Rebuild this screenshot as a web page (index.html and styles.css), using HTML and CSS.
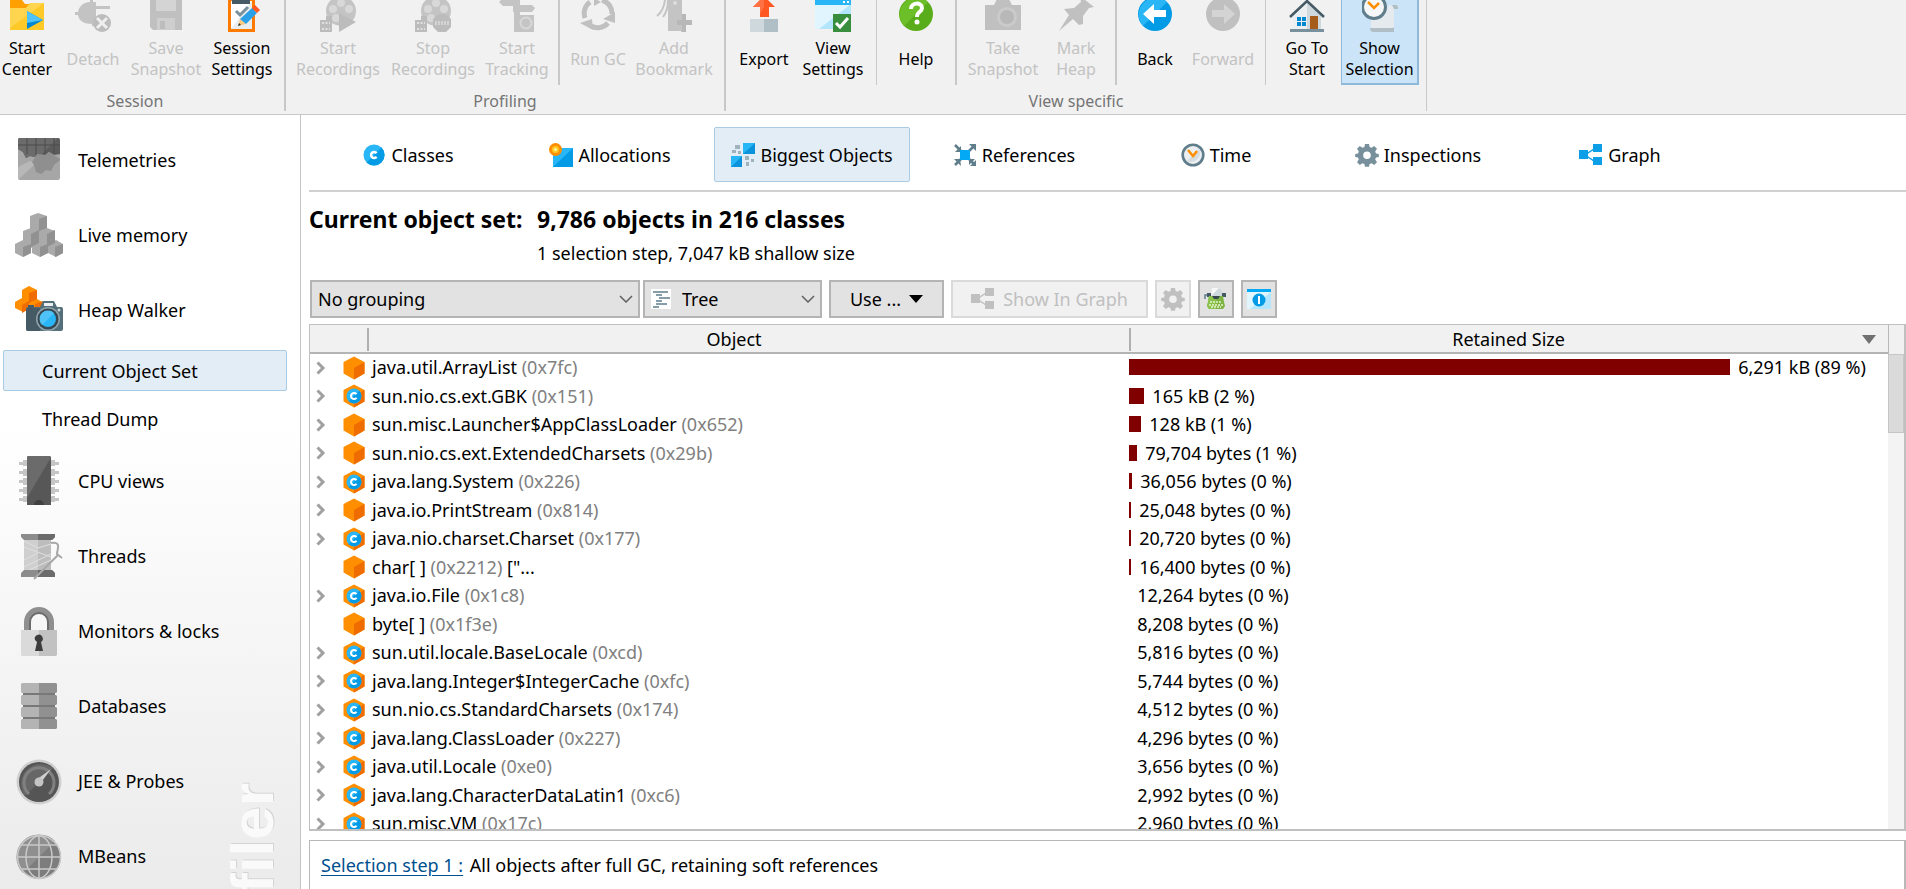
FILE: index.html
```html
<!DOCTYPE html>
<html lang="en">
<head>
<meta charset="utf-8">
<title>JProfiler - Heap Walker</title>
<link rel="stylesheet" href="styles.css">
</head>
<body>
<svg class="sprite" aria-hidden="true">
  <symbol id="cube" viewBox="0 0 22 24"><path fill="#ff8f00" d="M11 0.500L21.500 6v11.500L11 23.500 0.500 17.500V6z"/><path fill="#ef6c00" d="M11 12l10.500-6v11.500L11 23.500z"/></symbol>
  <symbol id="klass" viewBox="0 0 22 24"><path fill="#ff8f00" d="M11 0.500L21.500 6v11.500L11 23.500 0.500 17.500V6z"/><path fill="#ef6c00" d="M11 12l10.500-6v11.500L11 23.500z"/><circle cx="11" cy="12" r="7.500" fill="#29b6f6"/><path fill="#039be5" d="M16.300 6.700a7.500 7.500 0 0 1-10.600 10.600z"/><path d="M13.500 10.300a3 3 0 1 0 0 3.400" fill="none" stroke="#fff" stroke-width="2"/></symbol>
  <symbol id="expand" viewBox="0 0 10 14"><path d="M1.500 1.500L7 7l-5.500 5.500" fill="none" stroke="#a0a0a0" stroke-width="3"/></symbol>
  <symbol id="chev" viewBox="0 0 14 8"><path d="M1 1l6 6 6-6" fill="none" stroke="#606060" stroke-width="1.500"/></symbol>
  <symbol id="box3" viewBox="0 0 24 24"><path d="M18 4L6 12l12 8" fill="none" stroke="currentColor" stroke-width="1.500"/><path fill="currentColor" d="M0 7h9v9H0zM14 1h9v8h-9zM14 14h9v8h-9z"/></symbol>
  <symbol id="cog" viewBox="0 0 24 24"><path fill="currentColor" fill-rule="evenodd" d="M10 1h4l.6 3 2 .8L19.200 3 22 5.800l-1.800 2.600.8 2 2.800.6v3l-2.800.6-.8 2L22 19.200 19.200 22l-2.600-1.800-2 .8-.6 2.700h-4L9.400 21l-2-.8L4.800 22 2 19.200l1.800-2.600-.8-2L.2 14v-3l2.800-.6.8-2L2 5.800 4.800 3l2.600 1.800 2-.8zM12 8.500a3.800 3.800 0 1 0 0 7.600 3.800 3.800 0 0 0 0-7.600z"/></symbol>
</svg>

<header class="ribbon">
  <section class="group group-session">
    <div class="tools">
      <button class="tool w54"><svg viewBox="0 0 36 32"><path fill="#ffa000" d="M1 0h12l3 4h19v6H1z"/><path fill="#ffca28" d="M1 8h16l4-5h14v27H1z"/><path fill="#ffd54f" d="M1 8h16l4-5h14L1 28z"/><path fill="#0288d1" d="M18 11l16 9-16 9z"/><path fill="#4fc3f7" d="M18 11l16 9-16 3z"/></svg><span>Start<br>Center</span></button>
      <button class="tool one w78" disabled><svg viewBox="0 0 36 32"><path fill="#c3c3c3" d="M0 12h3c1-6 6-10 12-10V0h3v2h3v4h14v3H21v8h3v6h-4v3h-3v-2c-8 0-13-3-14-9H0z"/><circle cx="27" cy="23" r="9" fill="#bcbcbc"/><path d="M22 18l10 10M32 18L22 28" stroke="#eee" stroke-width="3"/></svg><span>Detach</span></button>
      <button class="tool w68" disabled><svg viewBox="0 0 36 32"><path fill="#c0c0c0" d="M2 0h32v30H5l-3-3z"/><path fill="#d4d4d4" d="M8 0h20v11H8z"/><path fill="#cecece" d="M9 18h18v12H9z"/><path fill="#bdbdbd" d="M12 21h5v8h-5z"/></svg><span>Save<br>Snapshot</span></button>
      <button class="tool w84"><svg viewBox="0 0 36 32"><path fill="#ff7a00" d="M4 0h27v32H4z"/><path fill="#fff" d="M7 1h21v28H7z"/><path fill="#e8eef0" d="M28 1v28H7z"/><path fill="#455a64" d="M8 0h18v4H8z"/><path d="M12 11l4 4 8-8" stroke="#78909c" stroke-width="3" fill="none"/><path fill="#ffca80" d="M14 26l2-7 6 5z"/><path fill="#263238" d="M14 26l1-3 2 2z"/><path fill="#29a0e8" d="M16 19L28 8l5 5-11 11z"/><path fill="#ff5722" d="M28 8l3-3 5 5-3 3z"/></svg><span>Session<br>Settings</span></button>
    </div>
    <div class="caption">Session</div>
  </section>
  <section class="group group-profiling">
    <div class="tools">
      <button class="tool w104" disabled><svg viewBox="0 0 36 32"><circle cx="21" cy="11" r="15" fill="#c4c4c4"/><g fill="#d8d8d8"><circle cx="21" cy="3" r="4"/><circle cx="13" cy="9" r="4"/><circle cx="29" cy="9" r="4"/><circle cx="16" cy="18" r="4"/></g><path fill="#bcbcbc" d="M0 20h6v-4h6v16H0zM19 13l17 9-17 10z"/><path d="M2 23h8M2 29h8" stroke="#ececec" stroke-width="1.500" stroke-dasharray="2 1.500"/></svg><span>Start<br>Recordings</span></button>
      <button class="tool w86" disabled><svg viewBox="0 0 36 32"><circle cx="21" cy="11" r="15" fill="#c4c4c4"/><g fill="#d8d8d8"><circle cx="21" cy="3" r="4"/><circle cx="13" cy="9" r="4"/><circle cx="29" cy="9" r="4"/><circle cx="16" cy="18" r="4"/></g><path fill="#bcbcbc" d="M0 20h6v-4h6v16H0zM23 14h8l5 5v8l-5 5h-8l-5-5v-8z"/><path d="M2 23h8M2 29h8" stroke="#ececec" stroke-width="1.500" stroke-dasharray="2 1.500"/><path d="M20 23h14" stroke="#d4d4d4" stroke-width="4" stroke-dasharray="2 1"/></svg><span>Stop<br>Recordings</span></button>
      <button class="tool w82" disabled><svg viewBox="0 0 36 32"><path fill="#c4c4c4" d="M0 2l4-4h17v7h12l3 3-3 4H21v3h14v17H15V12h-1V6H4z"/><circle cx="27" cy="23" r="5.500" fill="none" stroke="#d8d8d8" stroke-width="2"/></svg><span>Start<br>Tracking</span></button>
      <i class="sep wide"></i>
      <button class="tool one w76" disabled><svg viewBox="0 0 36 32"><path d="M10 2A14 14 0 0 0 5 18M11 26a14 14 0 0 0 17-3M32 14A14 14 0 0 0 22 0" fill="none" stroke="#c0c0c0" stroke-width="5"/><path fill="#c0c0c0" d="M0 23l12-4 1 11zM23 19l12 4V12zM14-2v8l7-4z"/></svg><span>Run GC</span></button>
      <button class="tool w76" disabled><svg viewBox="0 0 36 32"><path fill="#c4c4c4" d="M12 0h14v14h4v6h5v5h-5v7h-5v-1H12z"/><path d="M9 0C8 8 5 13 1 16M12 0c0 8-2 13-5 17" fill="none" stroke="#c4c4c4" stroke-width="2"/><path fill="#b8b8b8" d="M26 14h4v6h6v5h-6v7h-4v-7h-5v-5h5z"/><circle cx="19" cy="3" r="2" fill="#ddd"/></svg><span>Add<br>Bookmark</span></button>
    </div>
    <div class="caption">Profiling</div>
  </section>
  <section class="group group-view">
    <div class="tools">
      <button class="tool one w76"><svg viewBox="0 0 36 32"><path fill="#ff5722" d="M18-4l11 11h-6v10h-9V7H7z"/><path fill="#ff7043" d="M18-4v11l-4 7V7H7z"/><path fill="#cfd8dc" d="M4 19h14v13H4z"/><path fill="#b0bec5" d="M18 19h14v13H18z"/></svg><span>Export</span></button>
      <button class="tool w62"><svg viewBox="0 0 36 32"><path fill="#e1f5fe" d="M0 0h36v29H0z"/><path fill="#b3e5fc" d="M36 4v25H4z"/><path fill="#29b6f6" d="M0 0h36v5H0z"/><path d="M28 2h2m2 0h2" stroke="#fff" stroke-width="2"/><path fill="#388e3c" d="M18 14h18v18H18z"/><path d="M21 23l4 4 8-9" fill="none" stroke="#fff" stroke-width="3"/></svg><span>View<br>Settings</span></button>
      <i class="sep far"></i>
      <button class="tool one w78"><svg viewBox="0 0 36 32"><circle cx="18" cy="14" r="17" fill="#5aad1a"/><path fill="#6cbf28" d="M30 2A17 17 0 0 0 6 26z"/><path d="M13 9c0-7 11-7 11-1 0 4-5 4-5 8v1" fill="none" stroke="#fff" stroke-width="4"/><circle cx="19" cy="22" r="2.500" fill="#fff"/></svg><span>Help</span></button>
      <i class="sep wide"></i>
      <button class="tool w92" disabled><svg viewBox="0 0 36 32"><path fill="#c0c0c0" d="M0 5h9l3-6h12l3 6h9v25H0z"/><circle cx="22" cy="17" r="10" fill="#cacaca"/><circle cx="22" cy="17" r="7" fill="#b8b8b8"/></svg><span>Take<br>Snapshot</span></button>
      <button class="tool w54" disabled><svg viewBox="0 0 36 32"><path fill="#c0c0c0" d="M22-4l14 11-5 1-6 8v8l-4 1-6-6L1 31l10-16-5-6 10-1 7-6z"/></svg><span>Mark<br>Heap</span></button>
      <i class="sep wide far"></i>
      <button class="tool one w76"><svg viewBox="0 0 36 32"><circle cx="18" cy="14" r="17" fill="#039be5"/><path fill="#29b6f6" d="M30 2A17 17 0 0 0 6 26z"/><path fill="#fff" d="M6 14L17 4v6h12v7H17v7z"/></svg><span>Back</span></button>
      <button class="tool one w60" disabled><svg viewBox="0 0 36 32"><circle cx="18" cy="14" r="17" fill="#c0c0c0"/><path fill="#d4d4d4" d="M30 14L19 4v6H7v7h12v7z"/></svg><span>Forward</span></button>
      <i class="sep far"></i>
      <button class="tool home"><svg viewBox="0 0 36 32"><path fill="#eceff1" d="M4 13L18 0l14 13v17H4z"/><path fill="#cfd8dc" d="M18 0l14 13v17H18z"/><path d="M1 17L18 1l17 16" fill="none" stroke="#455a64" stroke-width="2.500"/><path fill="#78909c" d="M1 29h34v3H1z"/><path fill="#0288d1" d="M8 17h4v4H8zM13 17h4v4h-4zM8 22h4v4H8zM13 22h4v4h-4z"/><path fill="#a65d1c" d="M21 16h8v13h-8z"/></svg><span>Go To<br>Start</span></button>
      <button class="tool selected w78"><svg viewBox="0 0 36 32"><path fill="#e4eaee" d="M9 9h16l2-4h9v4h-4v20H9z"/><path fill="#b0bec5" d="M8 28h22c2 0 2-1 2-2v6H11c-2 0-3-2-3-4zM30 5h5l2 4h-5z"/><circle cx="12" cy="7" r="11.500" fill="#f5f7f8" stroke="#607d8b" stroke-width="3"/><path d="M6 2l6 6 5-5" fill="none" stroke="#ff8f00" stroke-width="2.500"/></svg><span>Show<br>Selection</span></button>
    </div>
    <div class="caption">View specific</div>
  </section>
</header>

<div class="workspace">
  <nav class="sidebar">
    <a class="nav" href="#telemetries"><svg viewBox="0 0 48 50"><path fill="#a6a6a6" d="M5 3h38q2 0 2 2v38q0 2-2 2H5q-2 0-2-2V5q0-2 2-2z"/><path fill="#b8b8b8" d="M3 32l12-6 6 2-17 16-1-1z"/><path fill="#5c5c5c" d="M5 3h38q2 0 2 2v14l-6 1-5-3-4 4-6-3-4 4-5-1-4 2-3-6-5-3V5q0-2 2-2z"/><path fill="#6b6b6b" d="M5 3h38L26 20l-6 2-5-1-4 2-3-6-5-3V5q0-2 2-2z"/><path d="M3 10h42M12 3v16M21 3v17M30 3v16M39 3v15" stroke="#4c4c4c" stroke-width="1"/><path fill="#8f8f8f" d="M45 24v1l-6 5-3 6-5-1-5 4-5-2-2-7-2-3 5-8 8 1 4-3 6 4z"/></svg>Telemetries</a>
    <a class="nav" href="#live"><svg viewBox="0 0 48 50"><path fill="#aaa" d="M15 6l8-3 9 3v13l-9 4-8-4z"/><path fill="#929292" d="M24 9l8-3v13l-8 4z"/><path fill="#aaa" d="M8 21l8-3 8 3v13l-8 4-8-4zM24 21l8-3 8 3v13l-8 4-8-4zM0 34l8-4 8 4v9l-8 4-8-4zM17 34l8-4 8 4v9l-8 4-8-4zM33 34l8-4 7 4v9l-7 4-8-4z"/><path fill="#919191" d="M16 24l8-4v13l-8 4zM32 24l8-4v13l-8 4zM8 37l8-3v9l-8 4zM25 37l8-3v9l-8 4zM40 37l8-3v9l-8 4z"/></svg>Live memory</a>
    <a class="nav" href="#heap"><svg viewBox="0 0 48 50"><path fill="#ff8f00" d="M7 5l7-4 8 4v9l7 4-9 12-6-7-6 4-8-4V17l7-4z"/><path fill="#ef6c00" d="M14 8l8-3v9l-8 4zM7 20l7-4v8l-7 4zM20 19l8-3v6h-8z"/><path fill="#546e7a" d="M11 24q0-2 2-2h12l3-6h11l3 6h4q2 0 2 2v20q0 2-2 2H13q-2 0-2-2z"/><path fill="#455a64" d="M13 20h6v3h-6zM13 23h12v23H13q-2 0-2-2V24z"/><path fill="#eceff1" d="M29 18h9v3h-9z"/><circle cx="33" cy="34" r="12" fill="#90a4ae"/><circle cx="33" cy="34" r="10.500" fill="#37474f"/><circle cx="33" cy="34" r="8" fill="#29b6f6"/><path fill="#4fc3f7" d="M39 28a8 8 0 0 0-12 12z"/><circle cx="44" cy="25" r="1.500" fill="#cfd8dc"/></svg>Heap Walker</a>
    <a class="sub active" href="#objects">Current Object Set</a>
    <a class="sub" href="#dump">Thread Dump</a>
    <a class="nav" href="#cpu"><svg viewBox="0 0 48 50"><path fill="#c6c6c6" d="M4 6h4V4l6 0v6H8V9H4zM4 15h4v-2h6v7H8v-2H4zM4 24h4v-2h6v7H8v-2H4zM4 33h4v-2h6v7H8v-2H4zM4 42h4v-2h6v6H8v-1H4zM44 6h-4V4l-6 0v6h6V9h4zM44 15h-4v-2h-6v7h6v-2h4zM44 24h-4v-2h-6v7h6v-2h4zM44 33h-4v-2h-6v7h6v-2h4zM44 42h-4v-2h-6v6h6v-1h4z"/><path fill="#575757" d="M13 0h22l1 1v48H12V1z"/><path fill="#6b6b6b" d="M13 0h22v3L12 42V1z"/><path fill="#404040" d="M19 49a5 5 0 0 1 10 0z"/></svg>CPU views</a>
    <a class="nav" href="#threads"><svg viewBox="0 0 48 50"><path fill="#cfcfcf" d="M9 8h27v32H9z"/><path fill="#bdbdbd" d="M23 8h13v32H23z"/><path d="M9 10l14 7 13-4M9 16l27 10M9 36l27-13M9 29l14-7M12 40l24-11" stroke="#e0e0e0" stroke-width="1" fill="none"/><path fill="#8c8c8c" d="M6 3h34v3l-3 3H9L6 6zM9 39h28l3 3v4H6v-4z"/><path fill="#6b6b6b" d="M23 3h17v3l-3 3H23zM23 39h14l3 3v4H23z"/><path d="M36 12c11-2 6 7 6 11l5 4M19 48l24-24" stroke="#a8a8a8" stroke-width="2" fill="none"/></svg>Threads</a>
    <a class="nav" href="#monitors"><svg viewBox="0 0 48 50"><path d="M12 25V16a12 12 0 0 1 24 0v9" fill="none" stroke="#8f8f8f" stroke-width="6"/><path d="M15 25V16a9 9 0 0 1 18 0v9" fill="none" stroke="#6b6b6b" stroke-width="2"/><path fill="#dadada" d="M6 24h18v26H7l-1-1z"/><path fill="#c2c2c2" d="M24 24h18v25l-1 1H24z"/><path fill="#3d3d3d" d="M20 34a4 4 0 1 1 6 2l2 9h-8l2-9z"/></svg>Monitors &amp; locks</a>
    <a class="nav" href="#databases"><svg viewBox="0 0 48 50"><path fill="#787878" d="M8 3h32v44H8z"/><path fill="#b4b4b4" d="M7 2h17v10H7l-1-1V3zM7 14h17v10H7l-1-1v-8zM7 26h17v10H7l-1-1v-8zM7 38h17v10H7l-1-1v-8z"/><path fill="#919191" d="M24 2h17l1 1v8l-1 1H24zM24 14h17l1 1v8l-1 1H24zM24 26h17l1 1v8l-1 1H24zM24 38h17l1 1v8l-1 1H24z"/></svg>Databases</a>
    <a class="nav" href="#jee"><svg viewBox="0 0 48 50"><circle cx="24" cy="26" r="22.500" fill="#cfcfcf"/><circle cx="24" cy="26" r="20" fill="#555"/><path fill="#666" d="M38 12A20 20 0 0 0 10 40z"/><path d="M14 38a15 15 0 1 1 20 0" fill="none" stroke="#808080" stroke-width="3"/><path fill="#cfcfcf" d="M21 24l15-11-11 15z"/><circle cx="24" cy="26" r="4.500" fill="#c4c4c4"/></svg>JEE &amp; Probes</a>
    <a class="nav" href="#mbeans"><svg viewBox="0 0 48 50"><circle cx="24" cy="26" r="22" fill="#7d7d7d"/><path fill="#8f8f8f" d="M40 10A22 22 0 0 0 8 42z"/><g fill="none" stroke="#c9c9c9" stroke-width="1.500"><circle cx="24" cy="26" r="21.500"/><ellipse cx="24" cy="26" rx="13" ry="21"/><path d="M24 4v44M2 26h44M6 14h36M6 38h36"/></g></svg>MBeans</a>
    <span class="watermark">filer</span>
  </nav>

  <main class="content">
    <nav class="tabs">
      <a class="tab" href="#classes"><svg viewBox="0 0 24 24"><circle cx="12" cy="12" r="10.500" fill="#29b6f6"/><path fill="#039be5" d="M19.500 4.500A10.500 10.500 0 0 1 4.500 19.500z"/><path d="M14.500 10.200a3 3 0 1 0 0 3.600" fill="none" stroke="#fff" stroke-width="2.500"/></svg>Classes</a>
      <a class="tab" href="#allocations"><svg viewBox="0 0 24 24"><path fill="#29b6f6" d="M4 5h20v19H4z"/><path fill="#039be5" d="M24 5v19H4z"/><circle cx="6.500" cy="6.500" r="6.500" fill="#ff8f00"/><circle cx="6.500" cy="6.500" r="3.500" fill="#ffca28"/><circle cx="6.500" cy="6.500" r="1.500" fill="#fff59d"/></svg>Allocations</a>
      <a class="tab active" href="#biggest"><svg viewBox="0 0 24 24"><path fill="#29b6f6" d="M12 0h12v11H12zM0 13h11v11H0z"/><path fill="#0a93dc" d="M24 0v11H12zM11 13v11H0z"/><path fill="#9fb3be" d="M4 2h5v4H4zM1 7h4v3H1zM7 8h3v3H7zM14 13h4v4h-4zM20 16h3v3h-3zM15 19h3v4h-3z"/></svg>Biggest Objects</a>
      <a class="tab" href="#references"><svg viewBox="0 0 24 24"><path d="M2 2l20 20M22 2L2 22" stroke="#607d8b" stroke-width="2.500"/><path fill="#607d8b" d="M8 3v6H2zM16 1h7v7zM1 16h6l1 7zM16 16h6l-6 6zM17 23h6v-6z"/><path fill="#03a9f4" d="M7 7h10v10H7z"/></svg>References</a>
      <a class="tab" href="#time"><svg viewBox="0 0 24 24"><circle cx="12" cy="12" r="10.300" fill="#eceff1" stroke="#607d8b" stroke-width="2.600"/><path fill="#d5dce0" d="M18 6A9 9 0 0 1 6 18z"/><path d="M7 7l5 6 4-5" fill="none" stroke="#ff8f00" stroke-width="2.500"/></svg>Time</a>
      <a class="tab" href="#inspections"><svg class="slate" viewBox="0 0 24 24"><use href="#cog"/></svg>Inspections</a>
      <a class="tab" href="#graph"><svg class="blue" viewBox="0 0 24 24"><use href="#box3"/></svg>Graph</a>
    </nav>

    <div class="summary">
      <h1>Current object set:</h1>
      <h1>9,786 objects in 216 classes</h1>
      <p>1 selection step, 7,047 kB shallow size</p>
    </div>

    <div class="toolbar">
      <div class="combo grouping"><select aria-label="Grouping"><option>No grouping</option></select><svg class="arrow"><use href="#chev"/></svg></div>
      <div class="combo mode"><svg class="lead" viewBox="0 0 20 20"><path fill="#fff" d="M0 0h20v20H0z"/><path d="M2 3h15M5 6h6M8 9h11M5 12h6M5 15h11M2 18h6" stroke="#607d8b" stroke-width="1.500"/></svg><select aria-label="View mode"><option>Tree</option></select><svg class="arrow"><use href="#chev"/></svg></div>
      <button class="btn use">Use ...<svg viewBox="0 0 14 8"><path d="M0 0h14L7 8z"/></svg></button>
      <button class="btn show" disabled><svg viewBox="0 0 24 24"><use href="#box3"/></svg>Show In Graph</button>
      <button class="btn square" disabled aria-label="Settings"><svg viewBox="0 0 24 24"><use href="#cog"/></svg></button>
      <button class="btn square" aria-label="Edit"><svg viewBox="0 0 24 24"><path fill="#cfd8dc" d="M8 1h7l3 3v6H7z"/><path fill="#f5f7f8" d="M8 1h7L7 9z"/><path d="M1 12V8h4" fill="none" stroke="#607d8b" stroke-width="1.500"/><path fill="#455a64" d="M3 6h4v4H3zM18 6h4v4h-4z"/><path fill="#7cb342" d="M5 9h14l1 6 1 4-2 3H5l-2-3 1-4z"/><path fill="#8bc34a" d="M5 9h7v13H5l-2-3 1-4z"/><path fill="#37474f" d="M8 9h8l-2 3h-4z"/><path d="M6 15h12M5 18h14M7 20h10" stroke="#e6f4d0" stroke-width="1.500" stroke-dasharray="2 1"/></svg></button>
      <button class="btn square" aria-label="Information"><svg viewBox="0 0 24 24"><path fill="#e1f5fe" d="M0 2h24v20H0z"/><path fill="#b3e5fc" d="M24 5v17H3z"/><path fill="#03a9f4" d="M0 2h24v3H0z"/><circle cx="12" cy="13" r="6.500" fill="#039be5"/><path d="M12 9v8" stroke="#fff" stroke-width="2"/></svg></button>
    </div>

    <div class="frame">
      <div class="scroll">
        <table class="objects">
          <colgroup><col class="c-tree"><col class="c-object"><col class="c-size"></colgroup>
          <thead><tr><th></th><th class="h-object">Object</th><th>Retained Size<svg class="sort" viewBox="0 0 14 9"><path d="M0 0h14L7 9z"/></svg></th></tr></thead>
          <tbody>
            <tr><td><svg class="ex"><use href="#expand"/></svg><svg class="ic"><use href="#cube"/></svg></td><td>java.util.ArrayList <em>(0x7fc)</em></td><td><div class="size"><i style="width:79.2%"></i>6,291 kB (89 %)</div></td></tr>
            <tr><td><svg class="ex"><use href="#expand"/></svg><svg class="ic"><use href="#klass"/></svg></td><td>sun.nio.cs.ext.GBK <em>(0x151)</em></td><td><div class="size"><i style="width:2%"></i>165 kB (2 %)</div></td></tr>
            <tr><td><svg class="ex"><use href="#expand"/></svg><svg class="ic"><use href="#cube"/></svg></td><td>sun.misc.Launcher$AppClassLoader <em>(0x652)</em></td><td><div class="size"><i style="width:1.6%"></i>128 kB (1 %)</div></td></tr>
            <tr><td><svg class="ex"><use href="#expand"/></svg><svg class="ic"><use href="#cube"/></svg></td><td>sun.nio.cs.ext.ExtendedCharsets <em>(0x29b)</em></td><td><div class="size"><i style="width:1.05%"></i>79,704 bytes (1 %)</div></td></tr>
            <tr><td><svg class="ex"><use href="#expand"/></svg><svg class="ic"><use href="#klass"/></svg></td><td>java.lang.System <em>(0x226)</em></td><td><div class="size"><i style="width:0.4%"></i>36,056 bytes (0 %)</div></td></tr>
            <tr><td><svg class="ex"><use href="#expand"/></svg><svg class="ic"><use href="#cube"/></svg></td><td>java.io.PrintStream <em>(0x814)</em></td><td><div class="size"><i style="width:0.26%"></i>25,048 bytes (0 %)</div></td></tr>
            <tr><td><svg class="ex"><use href="#expand"/></svg><svg class="ic"><use href="#klass"/></svg></td><td>java.nio.charset.Charset <em>(0x177)</em></td><td><div class="size"><i style="width:0.26%"></i>20,720 bytes (0 %)</div></td></tr>
            <tr><td><svg class="ex"></svg><svg class="ic"><use href="#cube"/></svg></td><td>char[ ] <em>(0x2212)</em> ["...</td><td><div class="size"><i style="width:0.26%"></i>16,400 bytes (0 %)</div></td></tr>
            <tr><td><svg class="ex"><use href="#expand"/></svg><svg class="ic"><use href="#klass"/></svg></td><td>java.io.File <em>(0x1c8)</em></td><td><div class="size"><i></i>12,264 bytes (0 %)</div></td></tr>
            <tr><td><svg class="ex"></svg><svg class="ic"><use href="#cube"/></svg></td><td>byte[ ] <em>(0x1f3e)</em></td><td><div class="size"><i></i>8,208 bytes (0 %)</div></td></tr>
            <tr><td><svg class="ex"><use href="#expand"/></svg><svg class="ic"><use href="#klass"/></svg></td><td>sun.util.locale.BaseLocale <em>(0xcd)</em></td><td><div class="size"><i></i>5,816 bytes (0 %)</div></td></tr>
            <tr><td><svg class="ex"><use href="#expand"/></svg><svg class="ic"><use href="#klass"/></svg></td><td>java.lang.Integer$IntegerCache <em>(0xfc)</em></td><td><div class="size"><i></i>5,744 bytes (0 %)</div></td></tr>
            <tr><td><svg class="ex"><use href="#expand"/></svg><svg class="ic"><use href="#klass"/></svg></td><td>sun.nio.cs.StandardCharsets <em>(0x174)</em></td><td><div class="size"><i></i>4,512 bytes (0 %)</div></td></tr>
            <tr><td><svg class="ex"><use href="#expand"/></svg><svg class="ic"><use href="#klass"/></svg></td><td>java.lang.ClassLoader <em>(0x227)</em></td><td><div class="size"><i></i>4,296 bytes (0 %)</div></td></tr>
            <tr><td><svg class="ex"><use href="#expand"/></svg><svg class="ic"><use href="#klass"/></svg></td><td>java.util.Locale <em>(0xe0)</em></td><td><div class="size"><i></i>3,656 bytes (0 %)</div></td></tr>
            <tr><td><svg class="ex"><use href="#expand"/></svg><svg class="ic"><use href="#klass"/></svg></td><td>java.lang.CharacterDataLatin1 <em>(0xc6)</em></td><td><div class="size"><i></i>2,992 bytes (0 %)</div></td></tr>
            <tr><td><svg class="ex"><use href="#expand"/></svg><svg class="ic"><use href="#klass"/></svg></td><td>sun.misc.VM <em>(0x17c)</em></td><td><div class="size"><i></i>2,960 bytes (0 %)</div></td></tr>
          </tbody>
        </table>
      </div>
      <div class="bar"><div class="corner"></div><div class="thumb"></div></div>
    </div>

    <div class="steps"><a href="#step1">Selection step 1 :</a> All objects after full GC, retaining soft references</div>
  </main>
</div>
</body>
</html>
```
FILE: styles.css
```css
* { box-sizing: border-box; }
body {
  margin: 0;
  height: 100vh;
  display: flex;
  flex-direction: column;
  overflow: hidden;
  background: #fff;
  color: #000;
  font: 18px/22px "Noto Sans", "Open Sans", sans-serif;
}
a { color: inherit; text-decoration: none; }
button, select { font: inherit; color: inherit; margin: 0; }
.sprite { display: none; }

/* ribbon */
.ribbon { flex: none; height: 115px; display: flex; background: #f1f1f1; border-bottom: 1px solid #c8c8c8; font-size: 16px; }
.group { height: 111px; border-right: 2px solid #c8c8c8; }
.group-view { border-right-width: 1px; }
.group-profiling .tools { padding-right: 12px; }
.group-view .tools { padding-right: 7px; }
.tools { display: flex; height: 85px; }
.tool { flex: none; height: 85px; padding: 0; border: 0; background: none; display: flex; flex-direction: column; align-items: center; line-height: 21px; gap: 6px; white-space: nowrap; }
.tool.one span { padding-top: 11px; }
.tool svg { flex: none; width: 36px; height: 32px; }
.tool:disabled { color: #c3c3c3; }
.tool.selected { background: #cce4f7; border: solid #8fb9d9; border-width: 0 2px 2px 1px; }
.tool.home { width: 75px; padding-left: 7px; }
.w54 { width: 54px; } .w60 { width: 60px; } .w62 { width: 62px; }
.w68 { width: 68px; } .w76 { width: 76px; } .w78 { width: 78px; }
.w82 { width: 82px; } .w84 { width: 84px; } .w86 { width: 86px; } .w92 { width: 92px; } .w104 { width: 104px; }
.sep { flex: none; width: 1px; background: #c8c8c8; }
.sep.wide { width: 2px; }
.sep.far { margin-left: 12px; }
.caption { text-align: center; color: #757575; line-height: 32px; }
.group-session .caption { padding-right: 14px; }

/* layout */
.workspace { flex: 1; min-height: 0; display: flex; }
.sidebar { position: relative; flex: none; width: 301px; padding-top: 7px; overflow: hidden; border-right: 1px solid #c4c4c4; background: linear-gradient(#fff 40%, #ebebeb); }
.content { flex: 1; min-width: 0; display: flex; flex-direction: column; padding-left: 8px; }

/* sidebar */
.nav { display: flex; align-items: center; gap: 15px; height: 75px; padding-left: 15px; }
.nav svg { flex: none; width: 48px; height: 50px; }
.sub { display: flex; align-items: center; height: 41px; margin: 3px 13px 3px 3px; padding-left: 38px; border: 1px solid transparent; border-radius: 2px; }
.sub.active { background: #e3edf6; border-color: #a9cbe3; }
.sub + .sub { height: 49px; margin-bottom: 0; }
.watermark { position: absolute; left: 218px; top: 668px; writing-mode: vertical-rl; transform: rotate(180deg); font: bold 60px/70px "Liberation Sans", sans-serif; color: #fafafa; text-shadow: 1px 1px 0 #d4d4d4; }

/* tabs */
.tabs { flex: none; display: flex; gap: 6px; height: 77px; padding: 12px 0 9px 1px; border-bottom: 2px solid #d0d0d0; }
.tab { width: 196px; height: 55px; display: flex; align-items: center; justify-content: center; gap: 5px; border: 1px solid transparent; border-radius: 2px; white-space: nowrap; }
.tab.active { background: #e3edf6; border-color: #a9cbe3; }
.tab svg { flex: none; width: 24px; height: 24px; }
.slate { color: #78909c; }
.blue { color: #0c9fe8; }

/* summary */
.summary { flex: none; display: grid; grid-template-columns: 228px 1fr; padding-top: 11px; height: 88px; align-content: start; }
.summary h1 { margin: 0; font-size: 23px; line-height: 32px; white-space: nowrap; }
.summary p { grid-column: 2; margin: 7px 0 0; }

/* toolbar */
.toolbar { flex: none; display: flex; gap: 7px; height: 44px; padding-left: 1px; }
.combo { position: relative; height: 38px; }
.combo select { width: 100%; height: 100%; appearance: none; border: 2px solid #b4b4b4; border-radius: 0; background: #e2e2e2; padding: 0 6px; }
.grouping { width: 330px; margin-right: -4px; }
.mode { width: 179px; }
.mode select { padding-left: 37px; }
.arrow { position: absolute; right: 7px; top: 15px; width: 14px; height: 8px; pointer-events: none; }
.lead { position: absolute; left: 8px; top: 9px; width: 20px; height: 20px; }
.btn { height: 38px; padding: 0; display: flex; align-items: center; justify-content: center; gap: 8px; border: 2px solid #b4b4b4; background: #e2e2e2; }
.btn svg { width: 24px; height: 24px; }
.btn:disabled { border-color: #dadada; background: #f1f1f1; color: #c0c0c0; }
.btn.use { width: 115px; }
.btn.use svg { width: 14px; height: 8px; }
.show { width: 197px; }
.square { width: 36px; }

/* object table */
.frame { flex: 1; min-height: 0; display: flex; border: 1px solid #c0c0c0; border-width: 1px 2px 2px 1px; margin-bottom: 9px; }
.scroll { flex: 1; min-width: 0; overflow: hidden; }
.objects { width: 100%; table-layout: fixed; border-collapse: separate; border-spacing: 0; }
.c-tree { width: 57px; }
.c-object { width: 48.3%; }
.objects th { position: relative; height: 29px; padding: 0; font-weight: normal; background: #f1f1f1; border-bottom: 2px solid #b4b4b4; }
.objects .h-object { padding-right: 28px; }
.objects th + th::before { content: ""; position: absolute; left: 0; top: 3px; bottom: 1px; width: 2px; background: #b0b0b0; }
.sort { position: absolute; right: 12px; top: 10px; width: 14px; height: 9px; fill: #707070; }
.objects td { height: 28px; padding: 0 0 2px; white-space: nowrap; vertical-align: middle; line-height: 22px; }
.objects tr:nth-child(even) td { height: 29px; }
.objects td:nth-child(2) { padding-left: 5px; }
.objects em { font-style: normal; color: #808080; }
.ex { width: 10px; height: 14px; margin: 0 17px 0 6px; vertical-align: middle; }
.ic { width: 22px; height: 24px; vertical-align: middle; }
.size { display: flex; align-items: center; gap: 8px; }
.size i { flex: none; height: 16px; background: #800000; }
.bar { flex: none; width: 16px; background: #f3f3f3; }
.corner { height: 29px; border-left: 1px solid #b8b8b8; background: #f1f1f1; }
.thumb { height: 79px; background: #dadada; border: 1px solid #c6c6c6; }

/* selection steps */
.steps { flex: none; height: 49px; padding: 13px 11px; border: 1px solid #b8b8b8; border-bottom: 0; border-right-width: 2px; }
.steps a { color: #00508f; text-decoration: underline; text-underline-offset: 3px; margin-right: 2px; }
```
